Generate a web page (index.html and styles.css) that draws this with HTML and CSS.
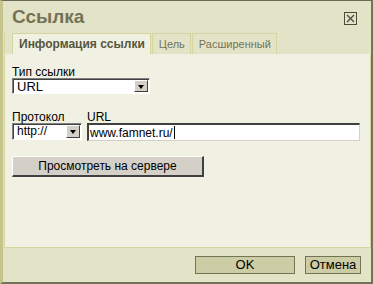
FILE: index.html
```html
<!DOCTYPE html>
<html lang="ru">
<head>
    <meta charset="UTF-8">
    <title>Ссылка</title>
    <link rel="stylesheet" href="styles.css">
</head>
<body>
    <div class="dialog">
        <div class="dlg-head">
            <div class="dlg-title">Ссылка</div>
            <span class="dlg-close">
                <svg width="13" height="13" viewBox="0 0 13 13">
                    <rect x="0.5" y="0.5" width="12" height="12" fill="none" stroke="#4a4a3a"/>
                    <path d="M3 3 L10 10 M10 3 L3 10" stroke="#4a4a3a" stroke-width="1.3"/>
                </svg>
            </span>
        </div>
        <ul class="tabs">
            <li class="tab active">Информация ссылки</li>
            <li class="tab">Цель</li>
            <li class="tab">Расширенный</li>
        </ul>
        <div class="dlg-body">
            <div class="field">
                <label>Тип ссылки</label>
                <div class="combo combo-type">
                    <span class="combo-val">URL</span>
                    <span class="combo-btn"></span>
                </div>
            </div>
            <div class="row">
                <div class="field">
                    <label>Протокол</label>
                    <div class="combo combo-proto">
                        <span class="combo-val">http://</span>
                        <span class="combo-btn"></span>
                    </div>
                </div>
                <div class="field grow">
                    <label>URL</label>
                    <div class="text-in"><span>www.famnet.ru/</span><i class="caret"></i></div>
                </div>
            </div>
            <div class="btn-browse">Просмотреть на сервере</div>
        </div>
        <div class="dlg-foot">
            <a class="btn btn-ok" href="javascript:void(0)">OK</a>
            <a class="btn btn-cancel" href="javascript:void(0)">Отмена</a>
        </div>
    </div>
</body>
</html>
```

FILE: styles.css
```css
body,div,ul,li,label{
    margin: 0;
    padding: 0;
}
body{
    font: 12px/1.2 "Liberation Sans", Arial, sans-serif;
    background: #e3e3c7;
}
ul{
    list-style-type: none;
}
a{
    text-decoration: none;
    color: #000;
}
.dialog{
    width: 373px;
    height: 284px;
    box-sizing: border-box;
    display: flex;
    flex-direction: column;
    background: #e3e3c7;
    border-top: 1px solid #6b6b55;
    border-right: 2px solid #737357;
    border-bottom: 2px solid #737357;
    border-left: 3px solid #c4c48c;
}
.dlg-head{
    display: flex;
    justify-content: space-between;
    height: 32px;
    padding: 0 14px 0 9px;
}
.dlg-title{
    font: 700 19px/30px "Liberation Sans", Arial, sans-serif;
    color: #737357;
    padding-top: 1px;
}
.dlg-close{
    padding-top: 11px;
    height: 13px;
}
.tabs{
    display: flex;
    height: 21px;
    padding-left: 7px;
    border-left: 1px solid #d5d59d;
    margin-left: 1px;
}
.tab{
    margin-right: 1px;
    padding: 0 5px 0 6px;
    font-size: 11px;
    line-height: 20px;
    color: #737357;
    border: 1px solid #d5d59d;
    border-bottom: 0;
    background: #e3e3c7;
}
.tab.active{
    font-size: 12px;
    font-weight: 700;
    padding: 0 5px 0 6px;
    color: #56563e;
    background: #f1f1e3;
}
.dlg-body{
    flex: 1;
    margin: 0 0 0 1px;
    padding: 11px 10px 0 7px;
    background: #f1f1e3;
    border-top: 1px solid #f1f1e3;
    border-left: 1px solid #d5d59d;
    border-right: 1px solid #d5d59d;
    border-bottom: 1px solid #d5d59d;
}
.field label{
    display: block;
    line-height: 12px;
    color: #000;
}
.row{
    display: flex;
    gap: 5px;
    margin-top: 17px;
}
.grow{
    flex: 1;
}
.combo{
    display: flex;
    box-sizing: border-box;
    height: 16px;
    background: #fff;
    border-top: 1px solid #808080;
    border-left: 1px solid #808080;
    border-right: 1px solid #fff;
    border-bottom: 1px solid #fff;
    box-shadow: inset 1px 1px 0 #404040;
    padding: 1px;
}
.combo-type{
    width: 138px;
}
.combo-proto{
    width: 70px;
    height: 17px;
}
.combo-val{
    flex: 1;
    padding-left: 3px;
    font-size: 13px;
    line-height: 13px;
}
.combo-proto .combo-val{
    font-size: 12px;
}
.combo-btn{
    position: relative;
    width: 14px;
    box-sizing: border-box;
    background: #d4d0c8;
    border-top: 1px solid #fff;
    border-left: 1px solid #fff;
    border-right: 1px solid #404040;
    border-bottom: 1px solid #404040;
}
.combo-btn:after{
    content: "";
    position: absolute;
    left: 3px;
    top: 4px;
    border-left: 3.5px solid transparent;
    border-right: 3.5px solid transparent;
    border-top: 4px solid #000;
}
.text-in{
    box-sizing: border-box;
    height: 18px;
    background: #fff;
    border-top: 2px solid #404040;
    border-left: 2px solid #404040;
    border-right: 1px solid #d4d0c8;
    border-bottom: 1px solid #d4d0c8;
    padding-left: 1px;
    line-height: 14px;
    display: flex;
    align-items: center;
}
.caret{
    display: inline-block;
    width: 1px;
    height: 13px;
    background: #000;
    margin-left: 1px;
}
.btn-browse{
    width: 192px;
    height: 21px;
    box-sizing: border-box;
    margin-top: 15px;
    text-align: center;
    line-height: 18px;
    background: #d4d0c8;
    border-top: 1px solid #fff;
    border-left: 1px solid #fff;
    border-right: 2px solid #404040;
    border-bottom: 2px solid #404040;
}
.dlg-foot{
    display: flex;
    justify-content: flex-end;
    gap: 10px;
    height: 34px;
    padding: 8px 10px 0 0;
    box-sizing: border-box;
}
.btn{
    display: block;
    height: 18px;
    box-sizing: border-box;
    text-align: center;
    line-height: 16px;
    background: #cdcda5;
    border: 1px solid #737357;
    font-size: 13px;
}
.btn-ok{
    width: 100px;
}
.btn-cancel{
    width: 56px;
}
```
